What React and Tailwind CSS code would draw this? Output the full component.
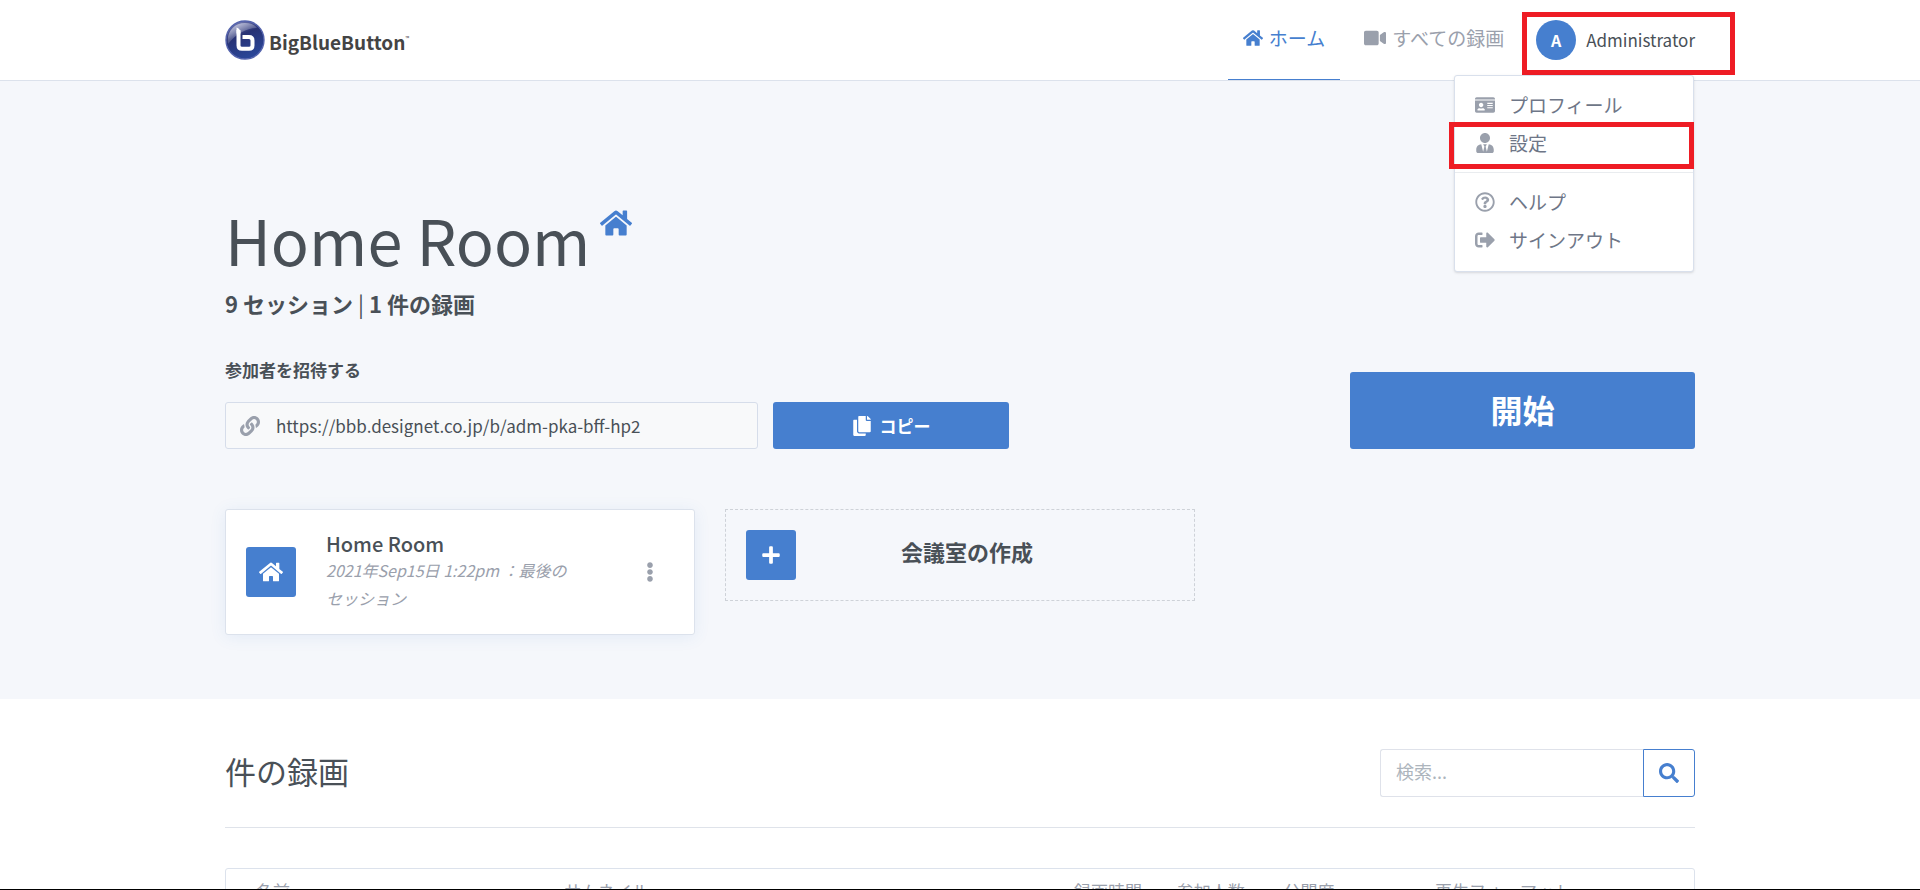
import React from 'react';
import {
  FaCopy,
  FaEllipsisV,
  FaHome,
  FaIdCard,
  FaLink,
  FaPlus,
  FaRegQuestionCircle,
  FaSearch,
  FaSignOutAlt,
  FaUserTie,
  FaVideo,
} from 'react-icons/fa';

const columns = [
  { label: '名前', className: 'w-[21%] pl-[30px]' },
  { label: 'サムネイル', className: 'w-[35%] pl-[30px]' },
  { label: '録画時間', className: 'w-[7%] pl-[26px]' },
  { label: '参加人数', className: 'w-[7%] pl-[26px]' },
  { label: '公開度', className: 'w-[11%] pl-[30px]' },
  { label: '再生フォーマット', className: 'w-[19%] pl-[20px]' },
];

function Logo() {
  return (
    <a href="#" className="flex items-center gap-1" aria-label="BigBlueButton">
      <svg viewBox="0 0 40 40" className="size-10" aria-hidden="true">
        <defs>
          <linearGradient id="ball" x1="0" y1="0" x2="0.4" y2="1">
            <stop offset="0" stopColor="#8d93c8" />
            <stop offset="0.45" stopColor="#283274" />
            <stop offset="1" stopColor="#2a4596" />
          </linearGradient>
          <linearGradient id="shine" x1="0" y1="0" x2="0.6" y2="0.8">
            <stop offset="0" stopColor="#fff" stopOpacity="0.7" />
            <stop offset="1" stopColor="#fff" stopOpacity="0" />
          </linearGradient>
        </defs>
        <circle cx="20" cy="20" r="19" fill="url(#ball)" stroke="#5463ad" strokeWidth="1.4" />
        <path d="M3 24C1 12 9 3 20 3c6 0 10 2 12 5C22 8 12 13 3 24z" fill="url(#shine)" />
        <path
          d="M13.500 10V25.500Q13.500 28.800 17 28.800H24Q27.500 28.800 27.500 25.500V20.500Q27.500 17 24 17H17.500"
          fill="none"
          stroke="#fff"
          strokeWidth="4"
          strokeLinejoin="round"
        />
        <path d="M11.500 7.500q4 1 4 6h-4z" fill="#fff" />
      </svg>
      <span className="flex items-start pt-1 text-[19px] leading-6 font-bold text-[#444]">
        BigBlueButton
        <span className="text-[5px] leading-4 font-normal">™</span>
      </span>
    </a>
  );
}

function MenuItem({ icon: Icon, children }) {
  return (
    <a href="#" role="menuitem" className="flex h-[38px] items-center gap-3 px-5 text-[19px] leading-6 text-[#6e7687]">
      <span className="flex w-[22px] justify-start">
        <Icon className="h-[20px] w-auto text-[#9aa0ac]" />
      </span>
      {children}
    </a>
  );
}

function UserMenu() {
  return (
    <div role="menu" className="absolute top-[75px] right-px z-10 w-60 rounded-[3px] border border-[#d9e0ec] bg-white pt-2.5 pb-3 shadow-sm">
      <MenuItem icon={FaIdCard}>プロフィール</MenuItem>
      <div className="relative">
        <MenuItem icon={FaUserTie}>設定</MenuItem>
        <div className="pointer-events-none absolute -top-0.5 -right-px -left-1.5 h-[47px] border-[5px] border-[#ee1c24]" />
      </div>
      <div className="my-2.5 border-t border-[#e9ecef]" />
      <MenuItem icon={FaRegQuestionCircle}>ヘルプ</MenuItem>
      <MenuItem icon={FaSignOutAlt}>サインアウト</MenuItem>
    </div>
  );
}

function Header() {
  return (
    <header className="border-b border-[#dce2ec] bg-white">
      <div className="relative mx-auto flex h-20 w-full max-w-[1470px] items-center justify-between">
        <Logo />
        <div className="flex h-full items-center">
          <nav className="flex h-full text-[19px] leading-6">
            <a href="#" className="flex items-center gap-1.5 border-b border-[#467fcf] px-[15px] pb-1 text-[#467fcf]">
              <FaHome className="size-5" />
              ホーム
            </a>
            <a href="#" className="flex items-center gap-1.5 px-6 pb-1 text-[#9aa0ac]">
              <FaVideo className="size-[22px]" />
              すべての録画
            </a>
          </nav>
          <button type="button" aria-haspopup="menu" className="relative ml-2 flex items-center gap-2.5">
            <span className="flex size-10 items-center justify-center rounded-full bg-[#467fcf] text-base font-bold text-white">A</span>
            <span className="text-[17px] leading-6 text-[#495057]">Administrator</span>
            <span className="pointer-events-none absolute -top-2 -right-10 -bottom-[15px] -left-3.5 border-[5px] border-[#ee1c24]" />
          </button>
        </div>
        <UserMenu />
      </div>
    </header>
  );
}

function RoomHero() {
  return (
    <section className="bg-[#f5f7fb] pt-[120px] pb-16">
      <div className="mx-auto w-full max-w-[1470px]">
        <div className="flex items-start gap-2.5">
          <h1 className="text-[63px] leading-[76px]">Home Room</h1>
          <FaHome className="mt-1.5 size-8 text-[#467fcf]" />
        </div>
        <h4 className="mt-3 text-[22px] leading-7 font-bold">
          9 セッション <span className="font-normal">|</span> 1 件の録画
        </h4>

        <div className="mt-[41px] flex items-end justify-between">
          <div>
            <label htmlFor="invite-url" className="block text-[17px] leading-6 font-bold">
              参加者を招待する
            </label>
            <div className="mt-5 flex gap-[15px]">
              <div className="flex h-[47px] w-[533px] items-center gap-4 rounded-[3px] border border-[#d6ddea] bg-[#f8f9fa] px-3.5">
                <FaLink className="size-5 text-[#9aa0ac]" />
                <input
                  id="invite-url"
                  readOnly
                  defaultValue="https://bbb.designet.co.jp/b/adm-pka-bff-hp2"
                  className="min-w-0 flex-1 bg-transparent text-[17px] leading-6 text-[#495057] outline-none"
                />
              </div>
              <button type="button" className="flex w-[236px] items-center justify-center gap-2 rounded-[3px] bg-[#467fcf] text-[17px] font-bold text-white">
                <FaCopy className="size-5" />
                コピー
              </button>
            </div>
          </div>
          <button type="button" className="h-[77px] w-[345px] rounded-[3px] bg-[#467fcf] pb-1 text-[32px] font-bold text-white">
            開始
          </button>
        </div>

        <div className="mt-[60px] grid grid-cols-3 items-start gap-[30px]">
          <div className="flex items-center rounded-[3px] border border-[#dce2ec] bg-white px-5 py-[22px] shadow-[0_2px_16px_rgba(70,127,207,0.1)]">
            <span className="flex size-[50px] shrink-0 items-center justify-center rounded-[3px] bg-[#467fcf]">
              <FaHome className="size-6 text-white" />
            </span>
            <div className="ml-[30px] w-[250px]">
              <h4 className="text-xl leading-6 font-medium">Home Room</h4>
              <p className="text-base leading-7 text-[#9aa0ac] italic">2021年Sep15日 1:22pm ：最後のセッション</p>
            </div>
            <button type="button" aria-label="会議室メニュー" className="mr-3.5 ml-auto">
              <FaEllipsisV className="size-5 text-[#9aa0ac]" />
            </button>
          </div>

          <button type="button" className="flex items-center border border-dashed border-[#ced2d8] px-5 py-5">
            <span className="flex size-[50px] shrink-0 items-center justify-center rounded-[3px] bg-[#467fcf]">
              <FaPlus className="size-5 text-white" />
            </span>
            <span className="flex-1 pr-9 pb-2 text-[22px] leading-7 font-bold">会議室の作成</span>
          </button>
        </div>
      </div>
    </section>
  );
}

function Recordings() {
  return (
    <section className="mx-auto w-full max-w-[1470px] pt-[50px]">
      <div className="flex items-start justify-between border-b border-[#dfe3ea] pb-[30px]">
        <h2 className="text-[31px] leading-[44px]">件の録画</h2>
        <form className="flex h-12">
          <input
            type="text"
            aria-label="検索"
            placeholder="検索..."
            className="w-[263px] rounded-l-[3px] border border-r-0 border-[#dfe2ea] px-[15px] pb-1 text-lg outline-none placeholder:text-[#adb5bd]"
          />
          <button type="button" aria-label="検索" className="flex w-[52px] items-center justify-center rounded-r-[3px] border border-[#467fcf]">
            <FaSearch className="size-5 text-[#467fcf]" />
          </button>
        </form>
      </div>

      <div className="mt-10 rounded-[3px] border border-[#dce2ec]">
        <table className="w-full table-fixed">
          <thead>
            <tr>
              {columns.map((column) => (
                <th key={column.label} className={`${column.className} py-2.5 text-left text-[17px] leading-6 font-normal whitespace-nowrap text-[#9aa0ac]`}>
                  {column.label}
                </th>
              ))}
            </tr>
          </thead>
        </table>
      </div>
    </section>
  );
}

export default function App() {
  return (
    <div className="h-screen overflow-hidden border-b border-black bg-white font-['Noto_Sans_CJK_JP',sans-serif] text-[#495057]">
      <Header />
      <RoomHero />
      <Recordings />
    </div>
  );
}
